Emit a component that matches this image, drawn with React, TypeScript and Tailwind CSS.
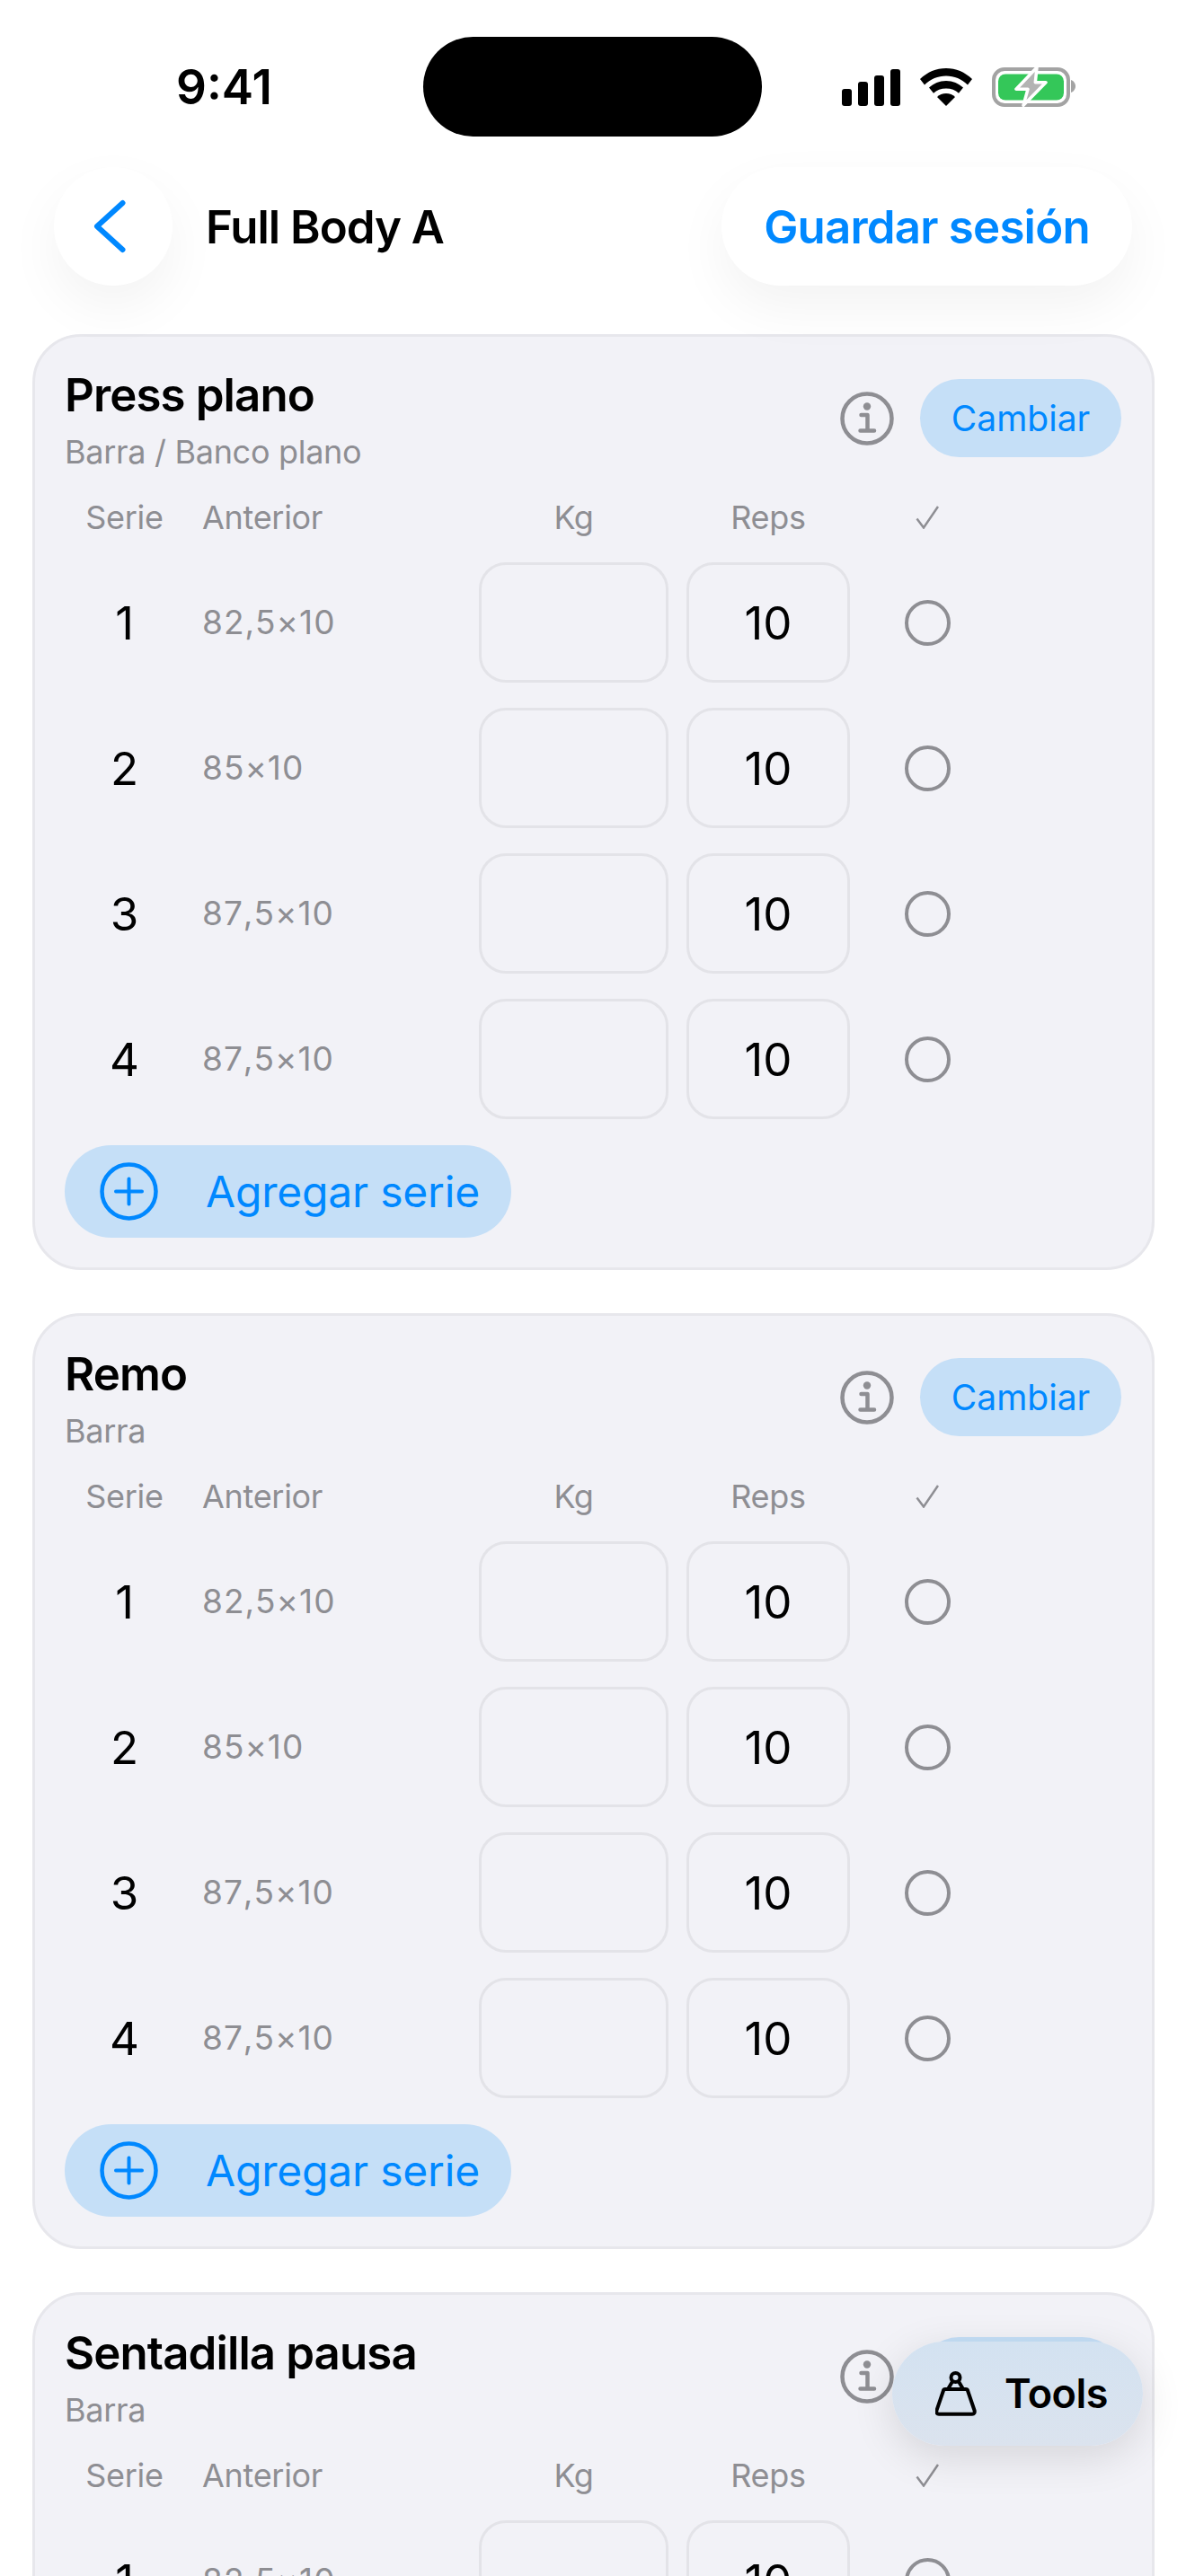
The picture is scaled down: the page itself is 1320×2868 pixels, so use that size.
import React from "react";

const font = { fontFamily: "Inter, 'Noto Sans', sans-serif" };

const Signal = () => (
  <svg width="65" height="41" viewBox="0 0 65 41" fill="#000">
    <rect x="0" y="22" width="11" height="19" rx="3" />
    <rect x="18" y="14" width="11" height="27" rx="3" />
    <rect x="36" y="7" width="11" height="34" rx="3" />
    <rect x="54" y="0" width="11" height="41" rx="3" />
  </svg>
);

const Wifi = () => (
  <svg width="58" height="42" viewBox="0 0 58 42" fill="#000">
    <path d="M29 0C18 0 8 4.300 0 12l5 6.500C11.500 12 20 8.500 29 8.500S46.500 12 53 18.500L58 12C50 4.300 40 0 29 0Z" />
    <path d="M29 14c-7.500 0-14 3-19 7.500l5 6.300C18.500 24.300 23.500 22.500 29 22.500s10.500 1.800 14 5.300l5-6.300C43 17 36.500 14 29 14Z" />
    <path d="M29 28c-4 0-7.500 1.500-10 4l10 10 10-10c-2.500-2.500-6-4-10-4Z" />
  </svg>
);

const Battery = () => (
  <svg width="93" height="46" viewBox="0 0 93 46">
    <rect x="2" y="3" width="83" height="40" rx="12" fill="none" stroke="#a3a3a3" strokeWidth="4" />
    <rect x="7" y="8.500" width="73" height="29" rx="8" fill="#34c759" />
    <path d="M88 15c3 .8 5 4 5 7s-2 6.200-5 7Z" fill="#a3a3a3" />
    <path d="M50 1 27 25.300H40L35 43.300 60 17.700H48.300Z" fill="#b3b3b3" stroke="#fff" strokeWidth="3.500" strokeLinejoin="round" />
  </svg>
);

const InfoIcon = () => (
  <svg width="60" height="60" viewBox="0 0 60 60" fill="none">
    <circle cx="30" cy="30" r="27.500" stroke="#8e8e93" strokeWidth="4.500" />
    <circle cx="30" cy="16.500" r="4.200" fill="#8e8e93" />
    <path d="M23.500 26H30.500V43M22.500 43.500H38" stroke="#8e8e93" strokeWidth="4.500" strokeLinecap="round" strokeLinejoin="round" />
  </svg>
);

const PlusIcon = () => (
  <svg width="65" height="65" viewBox="0 0 65 65" fill="none">
    <circle cx="32.500" cy="32.500" r="30" stroke="#0088ff" strokeWidth="4.500" />
    <path d="M32.500 18.500V46.500M18 32.500H47" stroke="#0088ff" strokeWidth="4" strokeLinecap="round" />
  </svg>
);

const WeightIcon = () => (
  <svg width="46" height="50" viewBox="0 0 46 50" fill="none">
    <circle cx="22.500" cy="7" r="5" stroke="#000" strokeWidth="4" />
    <path d="M19 11.500 14 20M26 11.500 31 20" stroke="#000" strokeWidth="4" />
    <path d="M11 20H34C35 20 35.800 20.600 36 21.500L43.500 43.500C44.300 46 43 47.800 41 47.800H4C2 47.800 .7 46 1.500 43.500L9 21.500C9.200 20.600 10 20 11 20Z" stroke="#000" strokeWidth="4" strokeLinejoin="round" />
  </svg>
);

const rows = [
  ["1", "82,5×10"],
  ["2", "85×10"],
  ["3", "87,5×10"],
  ["4", "87,5×10"],
];

const cols = "grid grid-cols-[133px_288px_211px_182px_132px] gap-x-5 items-center";

function Card({ title, sub }: { title: string; sub: string }) {
  return (
    <section className="shrink-0 h-[1042px] rounded-[54px] border-[3px] border-[#e7e7ec] bg-[#f2f2f7] pl-[33px] pr-[34px] pt-[33px]">
      <div className="flex items-start justify-between">
        <div>
          <h2 className="h-[63px] text-[51px] leading-[63px] font-semibold tracking-[-0.9px] text-black">{title}</h2>
          <p className="mt-[5px] h-[54px] text-[36px] leading-[54px] text-[#8e8e93] tracking-[-0.3px]">{sub}</p>
        </div>
        <div className="flex items-center gap-[29px] mt-[14px]">
          <InfoIcon />
          <button className="h-[87px] w-[224px] rounded-full bg-[#c5dff7] pt-[2px] text-[39px] text-[#0088ff]">Cambiar</button>
        </div>
      </div>
      <div className={`${cols} mt-[16px] h-[60px] text-[36px] text-[#8e8e93] tracking-[-0.3px]`}>
        <div className="text-center">Serie</div>
        <div>Anterior</div>
        <div className="text-center">Kg</div>
        <div className="text-center">Reps</div>
        <div className="flex justify-center">
          <svg width="26" height="26" viewBox="0 0 26 26" fill="none">
            <path d="M1.500 14.500 9 24.500 25 1" stroke="#8e8e93" strokeWidth="2.500" />
          </svg>
        </div>
      </div>
      <div className="mt-[20px] flex flex-col gap-[28px]">
        {rows.map(([n, prev]) => (
          <div key={n} className={cols}>
            <div className="pt-[2px] text-center text-[51px] text-black">{n}</div>
            <div className="text-[37px] tracking-[1px] text-[#8e8e93] [font-kerning:none]">{prev}</div>
            <div className="h-[134px] rounded-[30px] border-[3px] border-[#e3e3e8]" />
            <div className="flex h-[134px] items-center justify-center rounded-[30px] border-[3px] border-[#e3e3e8] pt-[2px] text-[51px] text-black">10</div>
            <div className="flex justify-center">
              <div className="h-[51px] w-[51px] rounded-full border-[4px] border-[#8e8e93]" />
            </div>
          </div>
        ))}
      </div>
      <button className="mt-[29px] flex h-[103px] w-[497px] items-center rounded-full bg-[#c5dff7] pl-[39px] text-[48px] text-[#0088ff] tracking-[-0.2px]">
        <PlusIcon />
        <span className="ml-[53px]">Agregar serie</span>
      </button>
    </section>
  );
}

export default function App() {
  return (
    <div style={font} className="relative h-[2868px] w-[1320px] overflow-hidden bg-white">
      <header className="relative z-10 h-[318px]">
        <div className="flex h-[186px] items-start pl-[196px]">
          <div className="mt-[63px] h-[68px] w-[275px] text-[53px] leading-[68px] font-semibold text-black">9:41</div>
          <div className="mt-[41px] h-[111px] w-[377px] rounded-full bg-black" />
          <div className="ml-[89px] mt-[74px] flex items-center gap-[22px]">
            <Signal />
            <Wifi />
            <Battery />
          </div>
        </div>
        <div className="flex h-[132px] items-center justify-between px-[60px]">
          <div className="flex items-center">
            <button className="flex h-[132px] w-[132px] items-center justify-center rounded-full bg-white shadow-[0_24px_60px_rgba(0,0,0,0.05)]">
              <svg width="38" height="60" viewBox="0 0 38 60" fill="none" className="mr-[8px]">
                <path d="M33.500 4 5 30 33.500 56" stroke="#0088ff" strokeWidth="6" strokeLinecap="round" strokeLinejoin="round" />
              </svg>
            </button>
            <h1 className="ml-[37px] pt-[2px] text-[51px] font-semibold tracking-[-1px] text-black">Full Body A</h1>
          </div>
          <button className="h-[132px] w-[457px] rounded-full bg-white pt-[2px] text-[51px] font-semibold tracking-[-0.8px] text-[#0088ff] shadow-[0_24px_60px_rgba(0,0,0,0.05)]">
            Guardar sesión
          </button>
        </div>
      </header>

      <main className="mt-[54px] flex flex-col gap-[48px] pl-[36px] pr-[35px]">
        <Card title="Press plano" sub="Barra / Banco plano" />
        <Card title="Remo" sub="Barra" />
        <Card title="Sentadilla pausa" sub="Barra" />
      </main>

      <button className="absolute left-[993px] top-[2607px] z-20 flex h-[116px] w-[279px] items-center rounded-full bg-gradient-to-b from-[#d3e2f1] to-[#dbe3ee] pl-[48px] shadow-[0_12px_48px_rgba(0,0,0,0.12)]">
        <WeightIcon />
        <span className="ml-[31px] text-[45px] font-semibold tracking-[-0.5px] text-black">Tools</span>
      </button>
    </div>
  );
}
